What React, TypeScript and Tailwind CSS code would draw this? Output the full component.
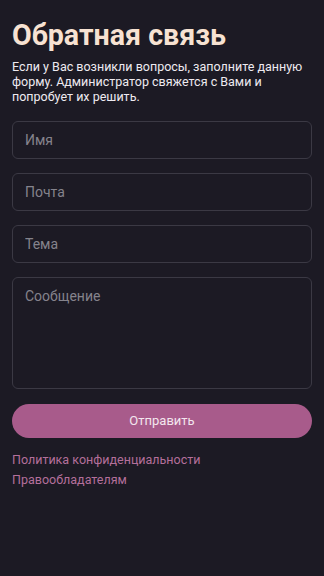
import React from 'react';

const App: React.FC = () => {
  return (
    <div className="min-h-[576px] w-full bg-[#1c1a24] px-3 pt-[18px] font-['Roboto',sans-serif]">
      <h1 className="text-[28.6px] font-bold leading-[34px] text-[#f7e2d2]">Обратная связь</h1>
      <p className="mt-[7px] text-[12.5px] leading-[15px] text-[#eeeaf0]">
        Если у Вас возникли вопросы, заполните данную форму. Администратор свяжется с Вами и попробует их решить.
      </p>

      <form className="mt-[17px] flex flex-col gap-[14px]" onSubmit={(e) => e.preventDefault()}>
        <input
          placeholder="Имя"
          className="h-[38px] w-full rounded-[6px] border border-[#3b3944] bg-transparent px-[12px] text-[14px] text-[#eeeaf0] placeholder:text-[#85838c] outline-none"
        />
        <input
          placeholder="Почта"
          className="h-[38px] w-full rounded-[6px] border border-[#3b3944] bg-transparent px-[12px] text-[14px] text-[#eeeaf0] placeholder:text-[#85838c] outline-none"
        />
        <input
          placeholder="Тема"
          className="h-[38px] w-full rounded-[6px] border border-[#3b3944] bg-transparent px-[12px] text-[14px] text-[#eeeaf0] placeholder:text-[#85838c] outline-none"
        />
        <textarea
          placeholder="Сообщение"
          className="h-[112px] w-full resize-none rounded-[6px] border border-[#3b3944] bg-transparent px-[12px] py-[8px] text-[14px] text-[#eeeaf0] placeholder:text-[#85838c] outline-none"
        />
        <button
          type="submit"
          className="mt-[1px] h-[34px] w-full rounded-full bg-[#a85b8b] text-[13px] text-[#f3e6ee]"
        >
          Отправить
        </button>
      </form>

      <div className="mt-[14px] flex flex-col gap-[5px] text-[12.5px] leading-[15px] text-[#b46f9b]">
        <a href="#">Политика конфиденциальности</a>
        <a href="#">Правообладателям</a>
      </div>
    </div>
  );
};

export default App;
